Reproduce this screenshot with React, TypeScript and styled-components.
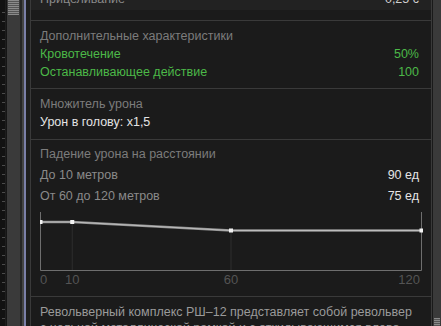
import React from "react";
import styled, { createGlobalStyle } from "styled-components";

const Global = createGlobalStyle`
  html, body { margin: 0; padding: 0; background: #151515; overflow: hidden; }
  body { font-family: "Liberation Sans", Arial, sans-serif; font-size: 12.5px; }
`;

const Frame = styled.div`
  display: flex;
  width: 441px;
  height: 326px;
  background: #151515;
`;

const Ruler = styled.div`
  width: 5px;
  background-color: #121212;
  background-image: repeating-linear-gradient(
    to bottom,
    transparent 0px,
    transparent 8px,
    #4a4a4a 8px,
    #4a4a4a 9px
  );
  background-size: 3px 100%;
  background-position: 2px 4px;
  background-repeat: no-repeat;
  border-right: 1px solid #1d1d1d;
`;

const Strip = styled.div<{ $w: number; $c: string }>`
  width: ${(p) => p.$w}px;
  flex: none;
  background: ${(p) => p.$c};
`;

const Track = styled.div<{ $w: number; $grip: "top" | "bottom" }>`
  width: ${(p) => p.$w}px;
  flex: none;
  background: #3a3a3a;
  display: flex;
  flex-direction: column;
  justify-content: ${(p) => (p.$grip === "top" ? "flex-start" : "flex-end")};
  padding: 0 1px;
  box-sizing: border-box;
`;

const Thumb = styled.div<{ $h: number }>`
  height: ${(p) => p.$h}px;
  background-color: #555;
  background-image: repeating-linear-gradient(
    to bottom,
    #8a8a8a 0px,
    #8a8a8a 1px,
    #555 1px,
    #555 2px
  );
`;

const Panel = styled.div`
  flex: none;
  width: 400px;
  border-left: 1px solid #3a3a3a;
  border-right: 1px solid #3a3a3a;
  background: #1b1b1b;
  overflow: hidden;
`;

const Content = styled.div`
  margin-top: -12px;
`;

const Section = styled.div<{ $pt: number; $pb: number; $first?: boolean }>`
  padding: ${(p) => p.$pt}px 12px ${(p) => p.$pb}px 9px;
  border-top: ${(p) => (p.$first ? "none" : "1px solid #3a3a3a")};
`;

const TopRow = styled.div`
  height: 22px;
  background: #222222;
  display: flex;
  align-items: center;
  justify-content: space-between;
  padding: 0 12px 0 9px;
  color: #8a8a8a;
`;

const Spacer = styled.div`
  height: 10px;
`;

const Title = styled.div<{ $h: number }>`
  height: ${(p) => p.$h}px;
  line-height: ${(p) => p.$h}px;
  color: #7c7c7c;
`;

type Tone = "green" | "muted" | "bright";
const toneColor = (t: Tone) =>
  t === "green" ? "#4cb948" : t === "muted" ? "#8a8a8a" : "#e4e4e4";

const Row = styled.div<{ $h: number }>`
  height: ${(p) => p.$h}px;
  display: flex;
  align-items: center;
  justify-content: space-between;
`;

const Label = styled.span<{ $tone: Tone }>`
  color: ${(p) => toneColor(p.$tone)};
`;

const Value = styled.span<{ $tone: Tone }>`
  color: ${(p) => toneColor(p.$tone)};
`;

const ChartWrap = styled.div`
  margin-top: 6px;
  height: 78px;
`;

const Desc = styled.p`
  margin: 0;
  color: #9a9a9a;
  line-height: 16px;
`;

const points = [
  { d: 0, v: 90 },
  { d: 10, v: 90 },
  { d: 60, v: 75 },
  { d: 120, v: 75 },
];

const X0 = 0.5;
const X1 = 381.5;
const xOf = (d: number) => X0 + ((X1 - X0) * d) / 120;
const yOf = (v: number) => (v === 90 ? 10 : 18.5);

function Chart() {
  const poly = points.map((p) => `${xOf(p.d)},${yOf(p.v)}`).join(" ");
  return (
    <svg width={383} height={78} viewBox="0 0 383 78">
      {points.slice(1, 3).map((p) => (
        <line
          key={p.d}
          x1={xOf(p.d)}
          x2={xOf(p.d)}
          y1={yOf(p.v)}
          y2={58.5}
          stroke="#2e2e2e"
          strokeWidth={1}
        />
      ))}
      <path
        d={`M${X0} 0 V58.5 H${X1} V0`}
        fill="none"
        stroke="#6e6e6e"
        strokeWidth={1}
      />
      <polyline points={poly} fill="none" stroke="#8f8f8f" strokeWidth={2.4} />
      <polyline points={poly} fill="none" stroke="#bdbdbd" strokeWidth={1} />
      {points.map((p) => (
        <rect
          key={p.d}
          x={xOf(p.d) - 2}
          y={yOf(p.v) - 2}
          width={4}
          height={4}
          fill="#f2f2f2"
        />
      ))}
      <g fill="#545454" fontSize={13} fontFamily='"Liberation Sans", Arial, sans-serif'>
        <text x={0} y={72} textAnchor="start">0</text>
        <text x={xOf(10)} y={72} textAnchor="middle">10</text>
        <text x={xOf(60)} y={72} textAnchor="middle">60</text>
        <text x={380} y={72} textAnchor="end">120</text>
      </g>
    </svg>
  );
}

export default function App() {
  return (
    <>
      <Global />
      <Frame>
        <Ruler />
        <Strip $w={1} $c="#151515" />
        <Track $w={13} $grip="top">
          <Thumb $h={15} />
        </Track>
        <Strip $w={2} $c="#262626" />
        <Strip $w={2} $c="#444444" />
        <Strip $w={2} $c="#7b80a9" />
        <Strip $w={4} $c="#1e1e1e" />
        <Panel>
          <Content>
            <TopRow>
              <span>Прицеливание</span>
              <span style={{ color: "#cfcfcf" }}>0,25 с</span>
            </TopRow>
            <Spacer />
            <Section $pt={6} $pb={7}>
              <Title $h={18}>Дополнительные характеристики</Title>
              <Row $h={18}>
                <Label $tone="green">Кровотечение</Label>
                <Value $tone="green">50%</Value>
              </Row>
              <Row $h={18}>
                <Label $tone="green">Останавливающее действие</Label>
                <Value $tone="green">100</Value>
              </Row>
            </Section>
            <Section $pt={6} $pb={8}>
              <Title $h={18}>Множитель урона</Title>
              <Row $h={18}>
                <Label $tone="bright">Урон в голову: x1,5</Label>
              </Row>
            </Section>
            <Section $pt={4} $pb={6}>
              <Title $h={20}>Падение урона на расстоянии</Title>
              <Row $h={21}>
                <Label $tone="muted">До 10 метров</Label>
                <Value $tone="bright">90 ед</Value>
              </Row>
              <Row $h={21}>
                <Label $tone="muted">От 60 до 120 метров</Label>
                <Value $tone="bright">75 ед</Value>
              </Row>
              <ChartWrap>
                <Chart />
              </ChartWrap>
            </Section>
            <Section $pt={7} $pb={8}>
              <Desc>
                Револьверный комплекс РШ–12 представляет собой револьвер с
                цельной металлической рамкой и с откидывающимся влево барабаном.
              </Desc>
            </Section>
          </Content>
        </Panel>
        <Strip $w={1} $c="#1a1a1a" />
        <Track $w={8} $grip="bottom">
          <Thumb $h={8} />
        </Track>
      </Frame>
    </>
  );
}
